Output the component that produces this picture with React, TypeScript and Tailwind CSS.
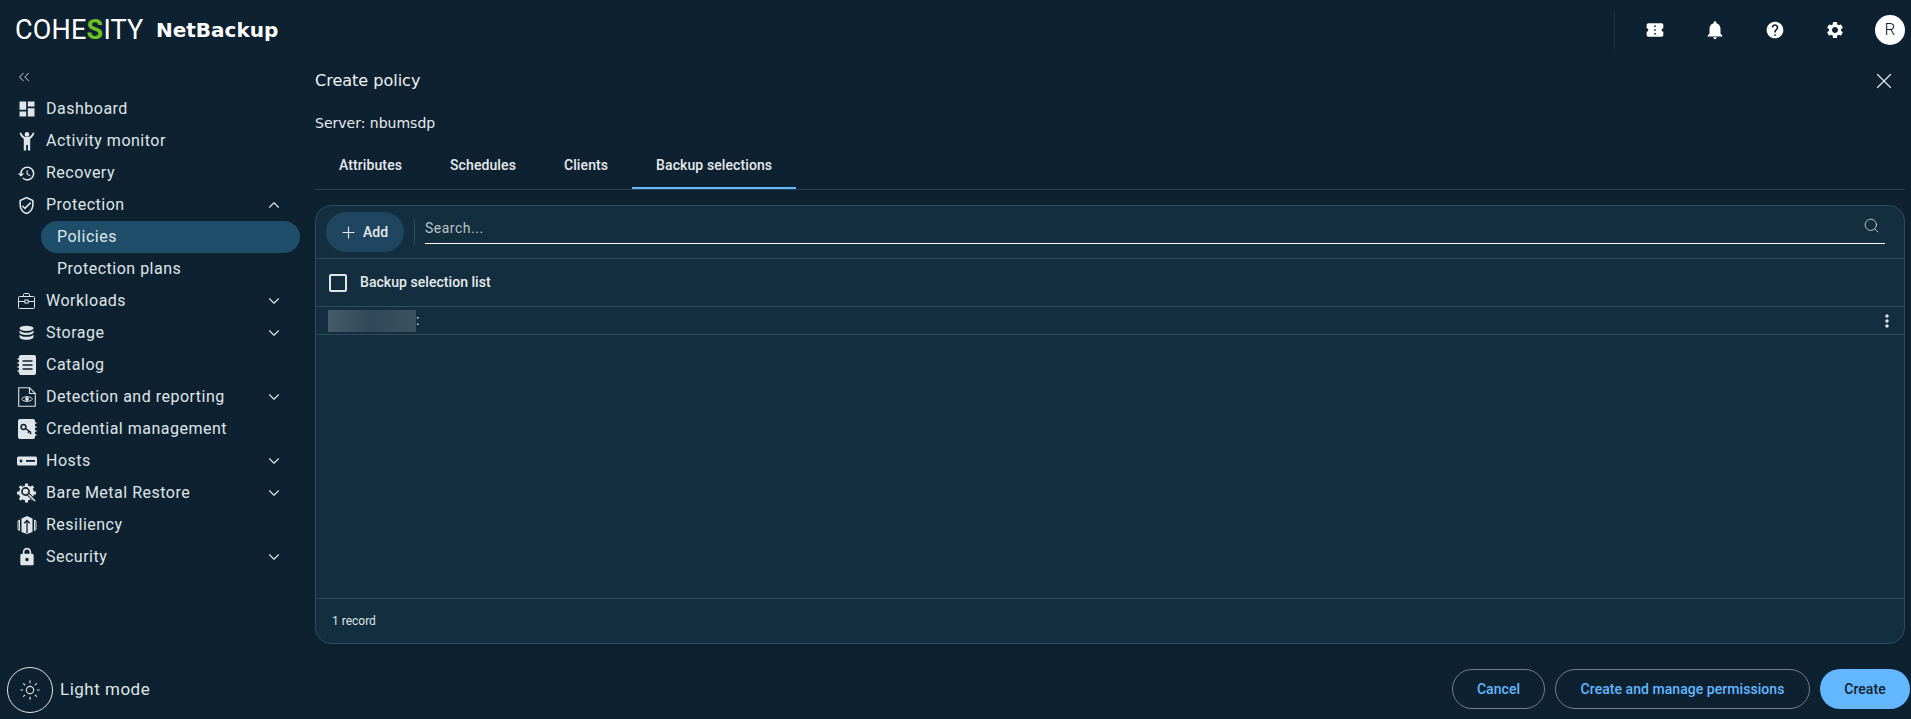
import React from "react";
import { MdDashboard, MdHistory, MdOutlineVerifiedUser, MdLock, MdConfirmationNumber, MdNotifications, MdHelp, MdSettings, MdMoreVert } from "react-icons/md";
import { ChevronDown, ChevronUp, ChevronsLeft, X, Plus, Search, Sun } from "lucide-react";

const Person = () => (
  <svg width="20" height="20" viewBox="0 0 20 20" fill="#dfe5e8">
    <circle cx="10" cy="3.4" r="2.3" />
    <path d="M2.6 2.2L4 1.2C4.9 3.6 6.6 6 10 6S15.1 3.6 16 1.2L17.4 2.2C16.6 4.6 15.2 6.6 13.2 7.8V19.4H10.9V14H9.1V19.4H6.8V7.8C4.8 6.6 3.4 4.6 2.6 2.2Z" />
  </svg>
);
const Briefcase = () => (
  <svg width="17" height="16" viewBox="0 0 17 16" fill="none" stroke="#dfe5e8" strokeWidth="1">
    <rect x="0.5" y="3.5" width="16" height="12" rx="1" />
    <path d="M5.5 3.5V1.5C5.5 1 6 0.5 6.5 0.5H10.5C11 0.5 11.5 1 11.5 1.5V3.5" />
    <path d="M0.5 8.5H6.8M10.2 8.5H16.5" />
    <rect x="6.8" y="7" width="3.4" height="3" />
  </svg>
);
const Db = () => (
  <svg width="15" height="16" viewBox="0 0 16 16" fill="#dfe5e8">
    <ellipse cx="8" cy="3" rx="7.5" ry="2.8" />
    <path d="M0.5 5.2C2 7 5 7.6 8 7.6S14 7 15.5 5.2V7.6C14.6 9.3 11 10 8 10S1.4 9.3 0.5 7.6Z" />
    <path d="M0.5 9.8C2 11.5 5 12 8 12S14 11.5 15.5 9.8V12.6C14.6 14.5 11 15.3 8 15.3S1.4 14.5 0.5 12.6Z" />
  </svg>
);
const Catalog = () => (
  <svg width="20" height="20" viewBox="0 0 20 20">
    <rect x="2" y="0" width="17" height="20" rx="2" fill="#dfe5e8" />
    <path d="M5.5 6H15.5M5.5 10H15.5M5.5 14H15.5" stroke="#0e2130" strokeWidth="1.4" />
    <path d="M0.5 4H3M0.5 8H3M0.5 12H3M0.5 16H3" stroke="#dfe5e8" strokeWidth="1.5" />
  </svg>
);
const DocEye = () => (
  <svg width="18" height="20" viewBox="0 0 18 20" fill="none">
    <path d="M0.7 0.7H11.5L17.3 6.5V19.3H0.7Z" stroke="#dfe5e8" strokeWidth="1.1" />
    <path d="M11.5 0.7V6.5H17.3" stroke="#dfe5e8" strokeWidth="1.1" />
    <path d="M3.5 12C6 8.8 12 8.8 14.5 12C12 15.2 6 15.2 3.5 12Z" stroke="#dfe5e8" strokeWidth="1" />
    <circle cx="9" cy="12" r="1.9" fill="#dfe5e8" />
  </svg>
);
const Cred = () => (
  <svg width="20" height="20" viewBox="0 0 20 20">
    <rect x="1" y="0" width="17" height="20" rx="2" fill="#dfe5e8" />
    <path d="M17 4H19.5M17 8H19.5M17 12H19.5M17 16H19.5" stroke="#dfe5e8" strokeWidth="1.5" />
    <circle cx="6.5" cy="8" r="2.4" fill="none" stroke="#0e2130" strokeWidth="1.5" />
    <path d="M8.5 9.5L14 13.5M12 12L11 13.8M14 13.5L13 15" stroke="#0e2130" strokeWidth="1.5" />
  </svg>
);
const Host = () => (
  <svg width="20" height="10" viewBox="0 0 20 10">
    <rect x="0" y="0.5" width="20" height="9" rx="1.5" fill="#dfe5e8" />
    <circle cx="4" cy="5" r="1.4" fill="#0e2130" />
    <rect x="9" y="4" width="9" height="1.8" fill="#0e2130" />
  </svg>
);
const Bmr = () => (
  <svg width="20" height="20" viewBox="0 0 20 20">
    <circle cx="9.5" cy="10" r="7.6" fill="#dfe5e8" />
    <path d="M9.5 0.5V19.5M0 10H19M2.8 3.3L16.2 16.7M16.2 3.3L2.8 16.7" stroke="#dfe5e8" strokeWidth="3" />
    <circle cx="8.5" cy="8.5" r="3.6" fill="none" stroke="#0e2130" strokeWidth="1.6" />
    <path d="M11 11L17 17" stroke="#0e2130" strokeWidth="3.2" />
    <path d="M11.5 11.5L18 18" stroke="#dfe5e8" strokeWidth="1.6" />
  </svg>
);
const Res = () => (
  <svg width="20" height="20" viewBox="0 0 20 20" fill="none">
    <path d="M4.5 3.5L10 1L15.5 3.5V17L10 19L4.5 17Z" fill="#dfe5e8" />
    <path d="M2.5 5V15.5L1 14.5V6ZM17.5 5V15.5L19 14.5V6Z" stroke="#dfe5e8" strokeWidth="1" />
    <path d="M10 18V6M7.2 8.2L10 5.5L12.8 8.2" stroke="#0e2130" strokeWidth="1.3" />
  </svg>
);

type Item = { label: string; icon: React.ReactNode; chevron?: "up" | "down"; sub?: boolean; active?: boolean };
const items: Item[] = [
  { label: "Dashboard", icon: <MdDashboard className="text-[20px] text-[#dfe5e8]" /> },
  { label: "Activity monitor", icon: <Person /> },
  { label: "Recovery", icon: <MdHistory className="text-[19px] text-[#dfe5e8]" /> },
  { label: "Protection", icon: <MdOutlineVerifiedUser className="text-[19px] text-[#dfe5e8]" />, chevron: "up" },
  { label: "Policies", icon: null, sub: true, active: true },
  { label: "Protection plans", icon: null, sub: true },
  { label: "Workloads", icon: <Briefcase />, chevron: "down" },
  { label: "Storage", icon: <Db />, chevron: "down" },
  { label: "Catalog", icon: <Catalog /> },
  { label: "Detection and reporting", icon: <DocEye />, chevron: "down" },
  { label: "Credential management", icon: <Cred /> },
  { label: "Hosts", icon: <Host />, chevron: "down" },
  { label: "Bare Metal Restore", icon: <Bmr />, chevron: "down" },
  { label: "Resiliency", icon: <Res /> },
  { label: "Security", icon: <MdLock className="text-[20px] text-[#dfe5e8]" />, chevron: "down" },
];

function NavRow({ item }: { item: Item }) {
  if (item.sub) {
    return (
      <div className={`ml-[41px] w-[259px] h-8 flex items-center pl-[16px] rounded-full ${item.active ? "bg-[#1f4e6b]" : ""}`}>
        <span>{item.label}</span>
      </div>
    );
  }
  return (
    <div className="h-8 flex items-center">
      <div className="w-[46px] pl-[16px] pr-[9px] flex items-center justify-center shrink-0">{item.icon}</div>
      <span className="flex-1">{item.label}</span>
      {item.chevron === "up" && <ChevronUp size={18} strokeWidth={1.5} className="mr-[32px] text-[#dfe5e8]" />}
      {item.chevron === "down" && <ChevronDown size={18} strokeWidth={1.5} className="mr-[32px] text-[#dfe5e8]" />}
    </div>
  );
}

export default function App() {
  const tabs = ["Attributes", "Schedules", "Clients", "Backup selections"];
  return (
    <div className="h-screen w-full flex flex-col overflow-hidden bg-[#0e2130] text-white font-['Roboto',sans-serif]">
      <header className="h-[60px] shrink-0 flex items-center">
        <div className="ml-[15px] w-[141px] text-[27px] leading-none tracking-[0.2px] font-['Roboto',sans-serif] font-normal text-white whitespace-nowrap">
          COHE<span className="text-[#6cc024] font-bold">S</span>ITY
        </div>
        <div className="text-[20px] font-bold font-['DejaVu_Sans',sans-serif]">NetBackup</div>
        <div className="ml-auto flex items-center pr-[6px]">
          <div className="w-px h-[39px] bg-[#1b3040] mr-[10px]" />
          <div className="w-[60px] flex justify-center"><MdConfirmationNumber className="text-[20px]" /></div>
          <div className="w-[60px] flex justify-center"><MdNotifications className="text-[22px]" /></div>
          <div className="w-[60px] flex justify-center"><MdHelp className="text-[20px]" /></div>
          <div className="w-[60px] flex justify-center"><MdSettings className="text-[20px]" /></div>
          <div className="ml-[10px] w-[30px] h-[30px] rounded-full bg-white text-[#0e2130] text-[17px] font-light flex items-center justify-center">R</div>
        </div>
      </header>
      <div className="flex-1 flex min-h-0">
        <aside className="w-[315px] shrink-0 flex flex-col text-[16px] tracking-[0.5px] text-[#dfe5e8]">
          <div className="h-[33px] flex items-center pl-[15px]"><ChevronsLeft size={18} strokeWidth={1.2} className="text-[#dfe5e8]" /></div>
          {items.map((it) => <NavRow key={it.label} item={it} />)}
          <div className="mt-auto pb-[6px] pl-[7px] flex items-center gap-[7px]">
            <div className="w-[46px] h-[46px] rounded-full border border-[#dfe5e8] flex items-center justify-center">
              <Sun size={22} strokeWidth={1.2} className="text-[#dfe5e8]" />
            </div>
            <span className="text-[17px]">Light mode</span>
          </div>
        </aside>
        <main className="flex-1 min-w-0 flex flex-col pr-[6px]">
          <div className="h-[42px] flex items-center justify-between">
            <span className="text-[16px] font-['DejaVu_Sans',sans-serif] text-[#f0f3f5]">Create policy</span>
            <X size={26} strokeWidth={1.1} className="mr-[8px] text-[#dfe5e8]" />
          </div>
          <div className="mt-[10px] h-[22px] flex items-center text-[14px] font-['DejaVu_Sans',sans-serif] text-[#e6eaed]">Server: nbumsdp</div>
          <div className="mt-[7px] h-[49px] flex border-b border-[#2b3f4d]">
            {tabs.map((t, i) => (
              <div key={t} className={`px-[24px] pt-[2px] h-[48px] flex items-center text-[14px] tracking-[0.1px] font-medium border-b-2 ${i === 3 ? "border-[#63b7ff]" : "border-transparent"} text-[#e6eaed]`}>{t}</div>
            ))}
          </div>
          <section className="mt-[15px] h-[439px] rounded-[16px] border border-[#2f4b5c] bg-[#132e3e] flex flex-col">
            <div className="h-[53px] shrink-0 flex items-center pl-[10px] pr-[19px] border-b border-[#2f4b5c]">
              <button className="w-[78px] h-10 rounded-full bg-[#1f4560] flex items-center pl-[13px] gap-[5px] text-[14px] font-medium text-[#e6eaed]">
                <Plus size={19} strokeWidth={1.4} />Add
              </button>
              <div className="ml-[10px] w-px h-[26px] bg-[#2f4b5c]" />
              <div className="ml-[10px] flex-1 h-[30px] mb-[6px] border-b border-white flex items-center justify-between">
                <span className="text-[14px] tracking-[0.5px] text-[#b9c4cb]">Search...</span>
                <Search size={17} strokeWidth={1.3} className="mr-[5px] -mt-[6px] text-[#c5ced4]" />
              </div>
            </div>
            <div className="h-[48px] shrink-0 flex items-center pl-[13px] border-b border-[#2f4b5c] text-[14px] tracking-[0.05px] font-medium text-[#e6eaed]">
              <div className="w-[18px] h-[18px] border-2 border-[#dfe5e8] rounded-[2px]" />
              <span className="ml-[13px]">Backup selection list</span>
            </div>
            <div className="h-[28px] shrink-0 flex items-center pl-[12px] pr-[7px] border-b border-[#2f4b5c] text-[14px] text-[#dfe5e8]">
              <div className="w-[88px] h-[22px] bg-gradient-to-r from-[#465c6b] via-[#30495a] to-[#3a5161]" />
              <span>:</span>
              <MdMoreVert className="ml-auto text-[20px] text-[#dfe5e8]" />
            </div>
            <div className="flex-1" />
            <div className="h-[45px] shrink-0 flex items-center pl-[16px] border-t border-[#2f4b5c] text-[12px] text-[#dfe5e8]">1 record</div>
          </section>
          <div className="mt-auto pb-[10px] flex justify-end items-center gap-[10px] -mr-[5px] text-[14px] tracking-[0.05px] font-medium">
            <button className="w-[93px] h-10 rounded-full border border-[#6f808c] text-[#63b7ff]">Cancel</button>
            <button className="w-[255px] h-10 rounded-full border border-[#6f808c] text-[#63b7ff]">Create and manage permissions</button>
            <button className="w-[90px] h-10 rounded-full bg-[#63b7ff] text-[#0e2130]">Create</button>
          </div>
        </main>
      </div>
    </div>
  );
}
